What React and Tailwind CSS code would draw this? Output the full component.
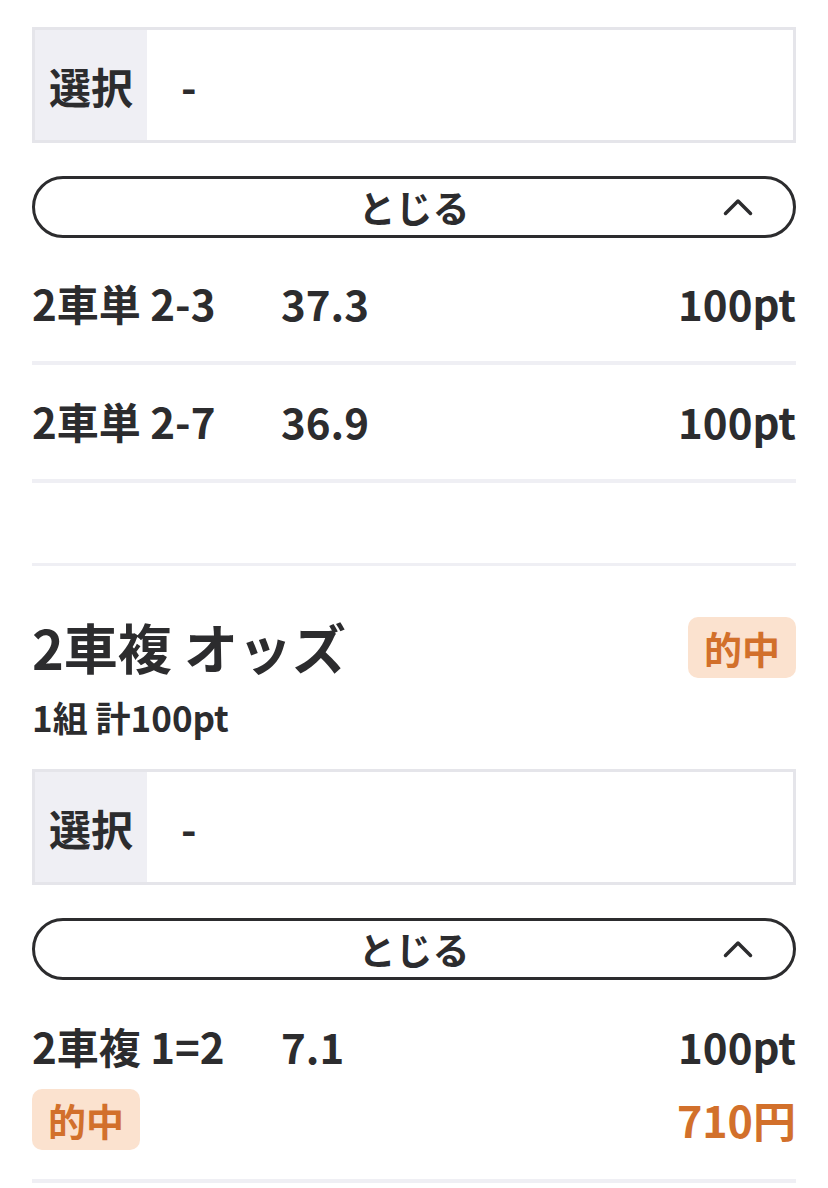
const font = {
  fontFamily: '"Noto Sans CJK JP", "Noto Sans", sans-serif',
};

function SelectBox() {
  return (
    <div className="flex h-[116px] border-[3px] border-[#e5e5ea]">
      <div className="flex w-[112px] items-center justify-center bg-[#efeff4] text-[42px] font-bold">
        選択
      </div>
      <div className="flex items-center pl-[34px] text-[42px] font-bold">-</div>
    </div>
  );
}

function CloseButton() {
  return (
    <button className="mt-[33px] grid h-[62px] w-full grid-cols-[1fr_auto_1fr] items-center rounded-full border-[3px] border-[#2c2c2e] bg-white">
      <span />
      <span className="text-[37px] font-bold leading-none">とじる</span>
      <span className="flex justify-end pr-[40px]">
        <svg width="30" height="18" viewBox="0 0 30 18" fill="none">
          <path
            d="M2.5 15.5 L15 3 L27.5 15.5"
            stroke="#2c2c2e"
            strokeWidth="3.5"
            strokeLinecap="round"
            strokeLinejoin="round"
          />
        </svg>
      </span>
    </button>
  );
}

function Badge() {
  return (
    <span className="inline-flex h-[61px] items-center rounded-[10px] bg-[#fbe2cf] px-[16px] text-[38px] font-bold text-[#d2702b]">
      的中
    </span>
  );
}

function BetRow({ name, odds, amount, hit, payout }) {
  return (
    <div
      className={
        hit
          ? "border-b-[4px] border-[#efeff4] pt-[28px] pb-[27px]"
          : "border-b-[4px] border-[#efeff4] pt-[27px] pb-[31px]"
      }
    >
      <div className="flex h-[56px] items-center text-[42px] font-bold">
        <span className="w-[249px]">{name}</span>
        <span className="flex-1">{odds}</span>
        <span>{amount}</span>
      </div>
      {hit && (
        <div className="mt-[14px] flex items-center justify-between">
          <Badge />
          <span className="text-[43px] font-bold text-[#d2702b]">{payout}</span>
        </div>
      )}
    </div>
  );
}

export default function App() {
  return (
    <div className="min-h-[1188px] bg-white px-[32px] pt-[27px] text-[#2c2c2e]" style={font}>
      {/* 2車単 */}
      <SelectBox />
      <CloseButton />
      <div className="mt-[9px]">
        <BetRow name="2車単 2-3" odds="37.3" amount="100pt" />
        <BetRow name="2車単 2-7" odds="36.9" amount="100pt" />
      </div>

      {/* 2車複 */}
      <div className="mt-[80px] border-t-[3px] border-[#efeff4] pt-[50px]">
        <div className="flex items-center justify-between">
          <h2 className="text-[54px] font-bold leading-[62px]">2車複 オッズ</h2>
          <Badge />
        </div>
        <p className="mt-[17px] text-[35px] font-bold leading-[44px]">1組 計100pt</p>
        <div className="mt-[30px]">
          <SelectBox />
        </div>
        <CloseButton />
        <div className="mt-[9px]">
          <BetRow name="2車複 1=2" odds="7.1" amount="100pt" hit payout="710円" />
        </div>
      </div>
    </div>
  );
}
